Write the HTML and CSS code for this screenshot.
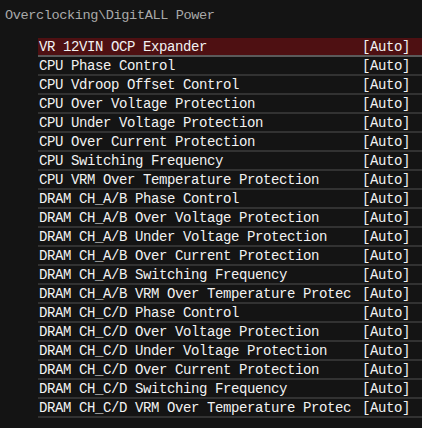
FILE: index.html
```html
<!DOCTYPE html>
<html lang="en">
<head>
  <meta charset="UTF-8" />
  <meta name="viewport" content="width=device-width, initial-scale=1.0"/>
  <title>DigitALL Power</title>
  <link rel="stylesheet" href="styles.css">
</head>
<body>
  <div class="path">Overclocking\DigitALL Power</div>

  <div class="settings">
    <div class="row selected"><span>VR 12VIN OCP Expander</span><span>[Auto]</span></div>
    <div class="row"><span>CPU Phase Control</span><span>[Auto]</span></div>
    <div class="row"><span>CPU Vdroop Offset Control</span><span>[Auto]</span></div>
    <div class="row"><span>CPU Over Voltage Protection</span><span>[Auto]</span></div>
    <div class="row"><span>CPU Under Voltage Protection</span><span>[Auto]</span></div>
    <div class="row"><span>CPU Over Current Protection</span><span>[Auto]</span></div>
    <div class="row"><span>CPU Switching Frequency</span><span>[Auto]</span></div>
    <div class="row"><span>CPU VRM Over Temperature Protection</span><span>[Auto]</span></div>
    <div class="row"><span>DRAM CH_A/B Phase Control</span><span>[Auto]</span></div>
    <div class="row"><span>DRAM CH_A/B Over Voltage Protection</span><span>[Auto]</span></div>
    <div class="row"><span>DRAM CH_A/B Under Voltage Protection</span><span>[Auto]</span></div>
    <div class="row"><span>DRAM CH_A/B Over Current Protection</span><span>[Auto]</span></div>
    <div class="row"><span>DRAM CH_A/B Switching Frequency</span><span>[Auto]</span></div>
    <div class="row"><span>DRAM CH_A/B VRM Over Temperature Protec</span><span>[Auto]</span></div>
    <div class="row"><span>DRAM CH_C/D Phase Control</span><span>[Auto]</span></div>
    <div class="row"><span>DRAM CH_C/D Over Voltage Protection</span><span>[Auto]</span></div>
    <div class="row"><span>DRAM CH_C/D Under Voltage Protection</span><span>[Auto]</span></div>
    <div class="row"><span>DRAM CH_C/D Over Current Protection</span><span>[Auto]</span></div>
    <div class="row"><span>DRAM CH_C/D Switching Frequency</span><span>[Auto]</span></div>
    <div class="row"><span>DRAM CH_C/D VRM Over Temperature Protec</span><span>[Auto]</span></div>
  </div>
</body>
</html>
```

FILE: styles.css
```css
body {
  font-family: 'Liberation Mono', 'DejaVu Sans Mono', monospace;
  background: #141414;
  color: #f2f2f2;
  margin: 0;
  padding: 0;
}

.path {
  color: #a9a9a9;
  font-size: 13.6px;
  letter-spacing: -0.4px;
  line-height: 15px;
  padding: 8px 0 0 5px;
  height: 38px;
  box-sizing: border-box;
}

.settings {
  margin-left: 38px;
}

.row {
  display: flex;
  justify-content: space-between;
  align-items: center;
  height: 17px;
  padding: 0 12px 0 1px;
  border-bottom: 2px solid #323232;
  font-size: 14px;
  letter-spacing: -0.4px;
  white-space: nowrap;
}

.row.selected {
  background: #4e1012;
  border-bottom-color: #5a5a5a;
}
```
